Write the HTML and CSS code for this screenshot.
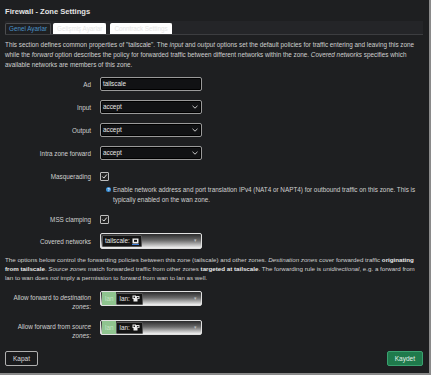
FILE: index.html
```
<!DOCTYPE html>
<html lang="tr">
<head>
    <meta charset="UTF-8">
    <meta name="viewport" content="width=device-width, initial-scale=1.0">
    <title>Firewall - Zone Settings</title>
    <link rel="stylesheet" href="styles.css">
</head>
<body>
    <div class="modal">
        <h4 class="modal-title">Firewall - Zone Settings</h4>

        <ul class="tabs">
            <li class="tab active">Genel Ayarlar</li>
            <li class="tab">Gelişmiş Ayarlar</li>
            <li class="tab">Conntrack Settings</li>
        </ul>

        <p class="section-desc">This section defines common properties of "tailscale". The <em>input</em> and <em>output</em> options set the default policies for traffic entering and leaving this zone while the <em>forward</em> option describes the policy for forwarded traffic between different networks within the zone. <em>Covered networks</em> specifies which available networks are members of this zone.</p>

        <div class="form-row">
            <label class="form-label">Ad</label>
            <div class="form-field">
                <div class="control">tailscale</div>
            </div>
        </div>

        <div class="form-row">
            <label class="form-label">Input</label>
            <div class="form-field">
                <div class="control select">accept
                    <svg class="chev" viewBox="0 0 6 4" width="6" height="4"><path d="M0.5 0.8 L3 3.2 L5.5 0.8" fill="none" stroke="#ddd" stroke-width="0.9"/></svg>
                </div>
            </div>
        </div>

        <div class="form-row">
            <label class="form-label">Output</label>
            <div class="form-field">
                <div class="control select">accept
                    <svg class="chev" viewBox="0 0 6 4" width="6" height="4"><path d="M0.5 0.8 L3 3.2 L5.5 0.8" fill="none" stroke="#ddd" stroke-width="0.9"/></svg>
                </div>
            </div>
        </div>

        <div class="form-row">
            <label class="form-label">Intra zone forward</label>
            <div class="form-field">
                <div class="control select">accept
                    <svg class="chev" viewBox="0 0 6 4" width="6" height="4"><path d="M0.5 0.8 L3 3.2 L5.5 0.8" fill="none" stroke="#ddd" stroke-width="0.9"/></svg>
                </div>
            </div>
        </div>

        <div class="form-row check-row">
            <label class="form-label">Masquerading</label>
            <div class="form-field">
                <span class="checkbox">
                    <svg viewBox="0 0 8 8" width="7" height="7"><path d="M1.5 4 L3.3 5.8 L6.6 1.8" fill="none" stroke="#eee" stroke-width="1.1"/></svg>
                </span>
            </div>
        </div>
        <div class="help">
            <span class="help-icon">?</span>
            <span>Enable network address and port translation IPv4 (NAT4 or NAPT4) for outbound traffic on this zone. This is typically enabled on the wan zone.</span>
        </div>

        <div class="form-row check-row">
            <label class="form-label">MSS clamping</label>
            <div class="form-field">
                <span class="checkbox">
                    <svg viewBox="0 0 8 8" width="7" height="7"><path d="M1.5 4 L3.3 5.8 L6.6 1.8" fill="none" stroke="#eee" stroke-width="1.1"/></svg>
                </span>
            </div>
        </div>

        <div class="form-row">
            <label class="form-label">Covered networks</label>
            <div class="form-field">
                <div class="dropdown">
                    <span class="chip dark">tailscale:
                        <svg class="chip-icon" viewBox="0 0 7 7" width="7" height="7"><rect x="0.5" y="0.5" width="6" height="5" fill="#eee"/><rect x="2" y="1.8" width="3" height="2" fill="#111"/><rect x="0" y="6" width="7" height="1" fill="#3a7bd5"/></svg>
                    </span>
                    <span class="dd-arrow">▾</span>
                </div>
            </div>
        </div>

        <p class="section-desc fwd-desc">The options below control the forwarding policies between this zone (tailscale) and other zones. <em>Destination zones</em> cover forwarded traffic <strong>originating from tailscale</strong>. <em>Source zones</em> match forwarded traffic from other zones <strong>targeted at tailscale</strong>. The forwarding rule is <em>unidirectional</em>, e.g. a forward from lan&nbsp;to&nbsp;wan does <em>not</em> imply a permission to forward from wan to lan as well.</p>

        <div class="form-row tall-row">
            <label class="form-label">Allow forward to <em>destination zones</em>:</label>
            <div class="form-field">
                <div class="dropdown">
                    <span class="chip green">lan</span>
                    <span class="chip dark">lan:
                        <svg class="chip-icon" viewBox="0 0 8 7" width="8" height="7"><rect x="0.5" y="0.5" width="3.5" height="3.5" fill="#eee"/><rect x="4" y="1" width="3.5" height="3" fill="#ddd"/><rect x="1.5" y="4" width="4" height="2.5" fill="#eee"/><rect x="1.5" y="1.5" width="1.5" height="1.5" fill="#222"/><rect x="5" y="2" width="1.5" height="1.2" fill="#222"/></svg>
                    </span>
                    <span class="dd-arrow">▾</span>
                </div>
            </div>
        </div>

        <div class="form-row tall-row">
            <label class="form-label">Allow forward from <em>source zones</em>:</label>
            <div class="form-field">
                <div class="dropdown">
                    <span class="chip green">lan</span>
                    <span class="chip dark">lan:
                        <svg class="chip-icon" viewBox="0 0 8 7" width="8" height="7"><rect x="0.5" y="0.5" width="3.5" height="3.5" fill="#eee"/><rect x="4" y="1" width="3.5" height="3" fill="#ddd"/><rect x="1.5" y="4" width="4" height="2.5" fill="#eee"/><rect x="1.5" y="1.5" width="1.5" height="1.5" fill="#222"/><rect x="5" y="2" width="1.5" height="1.2" fill="#222"/></svg>
                    </span>
                    <span class="dd-arrow">▾</span>
                </div>
            </div>
        </div>

        <div class="modal-actions">
            <button class="btn">Kapat</button>
            <button class="btn btn-save">Kaydet</button>
        </div>
    </div>
</body>
</html>
```

FILE: styles.css
```
* {
    margin: 0;
    padding: 0;
    box-sizing: border-box;
}

body {
    font-family: 'Liberation Sans', Arial, sans-serif;
    font-size: 6.35px;
    background: #1e1f21;
    color: #cfcfcf;
    width: 431px;
    height: 375px;
    overflow: hidden;
}

.modal {
    width: 431px;
    height: 375px;
    padding: 6px 5px 0 5px;
    border-right: 2px solid #8a8a8a;
    border-bottom: 2px solid #8a8a8a;
    background: #1e1f21;
}

.modal-title {
    font-size: 7.6px;
    font-weight: bold;
    color: #e4e4e4;
    line-height: 12px;
    margin-bottom: 3px;
}

.tabs {
    list-style: none;
    display: flex;
    gap: 2px;
    height: 14px;
    padding-top: 2px;
    margin-right: 1px;
    background: #242528;
    border-bottom: 1px solid #3c3d40;
}

.tab {
    font-size: 6.3px;
    line-height: 10px;
    padding: 0 3px;
    background: #fff;
    color: #e6e6e6;
    border: 1px solid #fff;
    border-bottom: none;
    border-radius: 2px 2px 0 0;
}

.tab:nth-child(3) {
    margin-left: 2px;
}

.tab.active {
    background: #1e1f21;
    color: #4a92c8;
    border-color: #4c4d50;
}

.section-desc {
    margin-top: 5px;
    line-height: 10px;
    padding-right: 7px;
}

.form-row {
    display: flex;
    align-items: center;
    margin-top: 9px;
    min-height: 14px;
}

.form-row:first-of-type {
    margin-top: 7px;
}

.form-label {
    width: 86px;
    text-align: right;
    margin-right: 9px;
    line-height: 9px;
}

.form-field {
    width: 102px;
}

.control {
    height: 14px;
    border: 1px solid #9a9a9a;
    border-radius: 2px;
    background: #111214;
    box-shadow: inset 0 0 0 1px #000;
    color: #e8e8e8;
    padding-left: 2px;
    line-height: 12px;
    display: flex;
    align-items: center;
}

.select .chev {
    margin-left: auto;
    margin-right: 3px;
}

.check-row {
    min-height: 9px;
    margin-top: 12px;
}

.checkbox {
    display: flex;
    align-items: center;
    justify-content: center;
    width: 9px;
    height: 9px;
    border: 1px solid #bdbdbd;
    border-radius: 1px;
    background: #222;
}

.help {
    display: flex;
    align-items: flex-start;
    margin: 4px 0 0 100px;
    padding-right: 4px;
    line-height: 9.5px;
}

.help-icon {
    flex: none;
    width: 5px;
    height: 5px;
    margin: 2px 2px 0 1px;
    border-radius: 50%;
    background: #3b8fd6;
    color: #fff;
    font-size: 4px;
    font-weight: bold;
    line-height: 5px;
    text-align: center;
}

.help + .form-row {
    margin-top: 11px;
}

.dropdown {
    position: relative;
    height: 16px;
    border: 1px solid #e0e0e0;
    border-radius: 2px;
    background: linear-gradient(#2a2a2b 0%, #6a6a6a 45%, #f2f2f2 100%);
    display: flex;
    align-items: center;
    padding-left: 1px;
}

.chip {
    display: flex;
    align-items: center;
    gap: 2px;
    height: 12px;
    padding: 0 2px;
    line-height: 12px;
}

.chip.dark {
    background: #141414;
    color: #e8e8e8;
    border: 1px solid #555;
    border-radius: 1px;
}

.chip.green {
    background: #8fc48f;
    color: #c6e4c6;
    height: 13px;
    padding: 0 3px;
}

.chip-icon {
    flex: none;
}

.dd-arrow {
    position: absolute;
    right: 4px;
    top: 3px;
    color: #bbb;
    font-size: 5px;
}

.fwd-desc {
    margin-top: 6px;
    margin-right: -3px;
    font-size: 6.2px;
    line-height: 9px;
    padding-right: 0;
}

.fwd-desc strong {
    color: #e8e8e8;
}

.tall-row {
    align-items: flex-start;
    margin-top: 9px;
}

.tall-row .form-label {
    padding-top: 2px;
}

.tall-row .dropdown {
    height: 15px;
}

.tall-row + .tall-row {
    margin-top: 9px;
}

.modal-actions {
    display: flex;
    justify-content: space-between;
    margin-top: 11px;
    padding-right: 1px;
}

.btn {
    font-family: inherit;
    font-size: 6.5px;
    height: 15px;
    padding: 0 7px;
    border: 1px solid #b0b0b0;
    border-radius: 2px;
    background: #1a1b1d;
    color: #d8d8d8;
    cursor: pointer;
}

.btn-save {
    background: #1f7a4c;
    border-color: #3aa070;
    color: #e6f2ea;
}
```
